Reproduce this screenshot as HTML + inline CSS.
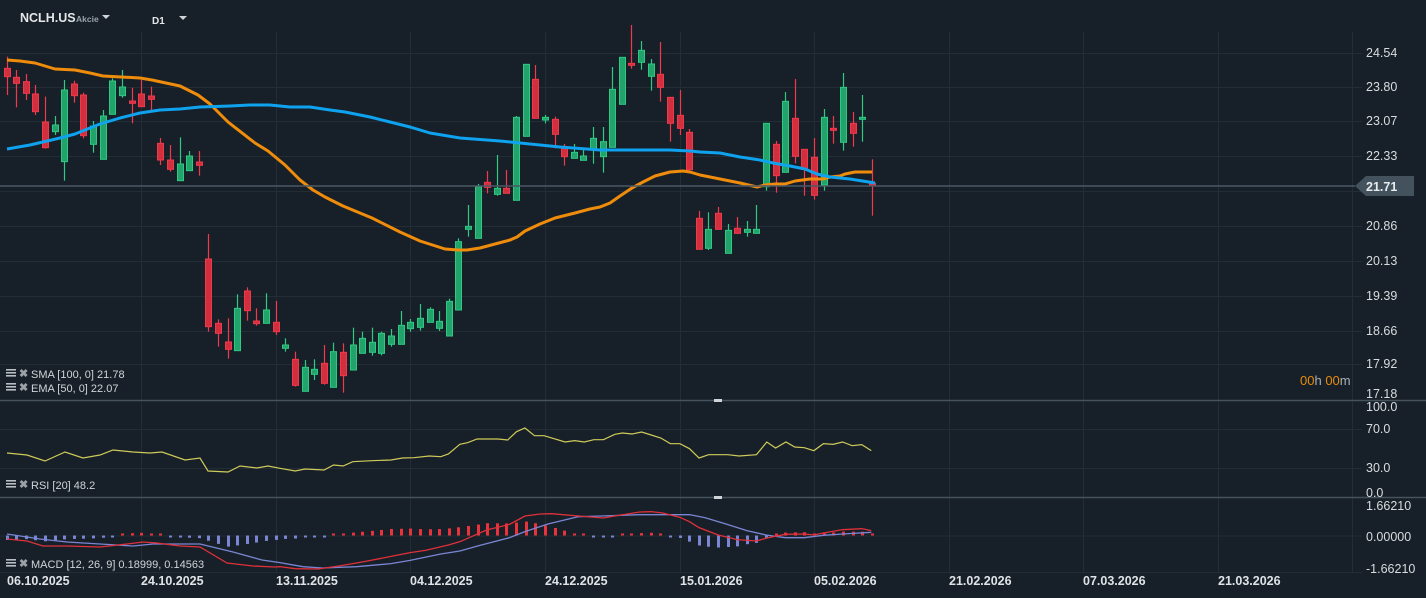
<!DOCTYPE html>
<html><head><meta charset="utf-8"><style>
html,body{margin:0;padding:0;background:#172028;width:1426px;height:598px;overflow:hidden}
svg{display:block}
text{font-family:"Liberation Sans",sans-serif}
</style></head><body>
<svg id="s" width="1426" height="598" xmlns="http://www.w3.org/2000/svg">
<rect width="1426" height="598" fill="#172028"/>
<g id="grid" stroke="#222d36" stroke-width="1"></g>
<g id="cd"></g>
<polyline id="ema" fill="none" stroke="#f08c0c" stroke-width="3" stroke-linejoin="round"/>
<polyline id="sma" fill="none" stroke="#0ea2ef" stroke-width="3" stroke-linejoin="round"/>
<line x1="0" y1="186" x2="1355" y2="186" stroke="#4a5866" stroke-width="1.5"/>
<polygon points="1355,186 1366,176 1414,176 1414,196 1366,196" fill="#44525e"/>
<text x="1366" y="191" fill="#e8ecef" font-size="12.5" font-weight="bold">21.71</text>
<line x1="0" y1="400.5" x2="1426" y2="400.5" stroke="#46525c" stroke-width="1.5"/>
<line x1="0" y1="497.5" x2="1426" y2="497.5" stroke="#46525c" stroke-width="1.5"/>
<rect x="714" y="399" width="8" height="3" fill="#d0d4d8"/>
<rect x="714" y="496" width="8" height="3" fill="#d0d4d8"/>
<polyline id="rsi" fill="none" stroke="#cfca5a" stroke-width="1.2"/>
<g id="hist"></g>
<polyline id="mb" fill="none" stroke="#7a86d4" stroke-width="1.3"/>
<polyline id="mr" fill="none" stroke="#e0303a" stroke-width="1.3"/>
<g id="axis" fill="#d8dcdf" font-size="12.5"></g>
<g id="dates" fill="#e0e3e6" font-size="12.5" font-weight="bold"></g>
<text x="20" y="22" fill="#e4e7ea" font-size="12.5" font-weight="bold">NCLH.US</text>
<text x="76" y="22" fill="#9aa3aa" font-size="8.5" font-weight="bold">Akcie</text>
<polygon points="102,15 110,15 106,19" fill="#d0d4d8"/>
<text x="152" y="24" fill="#e4e7ea" font-size="10" font-weight="bold">D1</text>
<polygon points="179,16 187,16 183,20" fill="#d0d4d8"/>
<text x="1300" y="385" font-size="13"><tspan fill="#e88a0a">00</tspan><tspan fill="#a8b0b6">h </tspan><tspan fill="#e88a0a">00</tspan><tspan fill="#a8b0b6">m</tspan></text>
<g id="leg" fill="#d0d4d8" font-size="11"></g>
</svg>
<script>
var NS="http://www.w3.org/2000/svg";
function el(p,t,a,txt){var e=document.createElementNS(NS,t);for(var k in a)e.setAttribute(k,a[k]);if(txt!==undefined)e.textContent=txt;document.getElementById(p).appendChild(e);return e;}
[53,87,121,156,191,226,261,296,331,364].forEach(function(y){el("grid","line",{x1:0,y1:y+0.5,x2:1362,y2:y+0.5});});
[429,468,535.5,572].forEach(function(y){el("grid","line",{x1:0,y1:y+0.5,x2:1362,y2:y+0.5});});
var gx=[141,276,410,545,680,814,949,1083,1218,1352];
gx.forEach(function(x){el("grid","line",{x1:x+0.5,y1:32,x2:x+0.5,y2:572});});
[["24.54",57],["23.80",91],["23.07",125],["22.33",160],["20.86",230],["20.13",265],["19.39",300],["18.66",335],["17.92",368],["17.18",398],["100.0",411],["70.0",433],["30.0",472],["0.0",497],["1.66210",510],["0.00000",541],["-1.66210",573]].forEach(function(a){el("axis","text",{x:1366,y:a[1]},a[0]);});
var dates=["06.10.2025","24.10.2025","13.11.2025","04.12.2025","24.12.2025","15.01.2026","05.02.2026","21.02.2026","07.03.2026","21.03.2026"];
var dx=[7,141,276,410,545,680,814,949,1083,1218];
dates.forEach(function(d,i){el("dates","text",{x:dx[i],y:585},d);});
var A=[[22,'R',55,80,20,135],[49,'R',82,100,60,172],[79,'R',95,130,72,150],[106,'R',132,185,105,195],[136,'R',216,293,140,296],[166,'G',225,245,198,255],[193,'G',120,335,90,392],[223,'R',102,137,92,158],[250,'R',135,257,128,265],[280,'G',228,283,213,308],[310,'G',198,328,180,328],[337,'G',93,193,85,193],[367,'G',111,137,60,143],[395,'R',153,160,113,220],[424,'R',132,170,90,170],[454,'R',138,148,110,180],[481,'R',280,330,264,345],[511,'R',330,358,285,365],[541,'G',342,392,262,392],[568,'G',318,362,303,362],[598,'R',336,346,303,377],[625,'R',627,830,552,845],[655,'R',820,850,808,890],[685,'R',876,898,805,926],[712,'G',775,902,733,902],[742,'R',723,782,712,812],[769,'R',813,821,775,827],[799,'G',780,820,730,820],[829,'R',817,845,753,855],[856,'G',885,895,865,905],[886,'R',928,1006,905,1010],[916,'G',952,1024,930,1024],[943,'G',958,973,928,990],[973,'R',940,1000,885,1004],[1000,'G',905,1012,878,1012],[1030,'R',907,977,880,1028],[1060,'G',885,960,833,960],[1087,'G',865,910,845,910],[1117,'G',877,907,833,917],[1144,'G',850,910,845,916],[1174,'G',858,883,837,890],[1204,'G',826,883,783,883],[1231,'G',817,836,807,845],[1261,'G',805,832,762,842],[1291,'G',778,817,772,817],[1318,'G',814,835,783,843],[1348,'G',754,858,746,858],[1375,'G',575,780,565,780]];
var B=[[85,'G',619,628,555,650],[115,'G',500,655,492,655],[142,'R',487,502,453,520],[172,'G',505,523,405,527],[199,'R',505,520,450,520],[229,'G',292,541,288,541],[259,'G',133,349,133,349],[286,'R',178,295,135,295],[316,'G',292,300,285,310],[346,'R',298,343,290,385],[373,'R',385,410,372,437],[403,'G',397,415,372,415],[430,'G',408,421,390,421],[460,'G',355,390,321,431],[490,'G',365,410,321,458],[517,'G',208,382,141,382],[547,'G',112,253,112,253],[574,'R',130,136,15,146],[604,'G',91,127,63,149],[634,'G',132,169,117,212],[661,'R',163,202,66,245],[691,'R',232,310,232,365],[721,'R',286,325,210,345],[748,'R',337,449,327,449],[778,'R',595,688,573,688],[805,'G',628,685,577,690],[835,'R',580,628,561,628],[865,'G',631,700,612,700],[892,'R',625,640,591,640],[922,'G',628,637,603,650],[949,'G',628,640,555,640],[979,'G',310,500,310,512],[1009,'R',373,467,363,518],[1036,'G',244,457,216,457],[1066,'R',295,409,177,430],[1093,'R',388,448,388,527],[1123,'R',412,526,354,539],[1153,'G',292,495,267,512],[1180,'R',325,331,288,371],[1210,'G',202,367,159,392],[1240,'R',310,340,276,380],[1267,'G',292,298,225,365],[1297,'R',490,495,418,587]];
var C=[];
A.forEach(function(c){C.push([c[0]/3,c[1],50+c[2]/3,50+c[3]/3,50+c[4]/3,50+c[5]/3]);});
B.forEach(function(c){C.push([440+c[0]/3,c[1],20+c[2]/3,20+c[3]/3,20+c[4]/3,20+c[5]/3]);});
C.forEach(function(c){
 var x=Math.round(c[0]), r=c[1]=='R', f=r?'#d22f3e':'#22a36b', s=r?'#f2384b':'#2fca82';
 el("cd","line",{x1:x+0.5,y1:c[4],x2:x+0.5,y2:c[5],stroke:s,'stroke-width':1.2});
 var h=Math.max(c[3]-c[2],2);
 el("cd","rect",{x:x-2.5,y:c[2],width:6,height:h,fill:f,stroke:s,'stroke-width':1});
});
function pl(id,pts){document.getElementById(id).setAttribute("points",pts.map(function(p){return p[0]+","+p[1];}).join(" "));}
pl("ema",[[7,60],[20,61],[35,63],[55,69],[75,70],[90,73],[103,76],[140,78],[152,80],[180,86],[198,95],[210,104],[228,122],[255,143],[268,151],[285,165],[300,180],[313,190],[325,197],[343,206],[372,218],[400,232],[420,241],[445,249],[458,250],[467,250],[480,248],[495,244],[510,240],[517,237],[525,231],[540,224],[555,218],[575,213],[590,209],[600,207],[610,203],[620,196],[632,188],[643,182],[655,176],[670,172],[683,171],[690,172],[700,175],[720,179],[740,183],[757,187],[765,185],[775,184],[785,184],[795,181],[810,179],[823,179],[830,177],[840,176],[845,174],[855,172],[872,172]]);
pl("sma",[[7,149],[30,145],[60,138],[75,134],[100,124],[120,118],[140,113],[160,110],[180,109],[200,107],[230,106],[250,105],[270,105],[290,107],[310,107],[330,110],[345,112],[370,117],[390,122],[410,127],[430,133],[460,138],[500,141],[520,143],[540,145],[560,147],[600,150],[640,150],[670,150],[690,151],[700,152],[720,153],[740,157],[760,160],[773,163],[790,166],[805,169],[817,174],[830,177],[850,179],[875,183]]);
var R=[[7,453],[27,455],[45,461],[65,452],[83,458],[100,455],[113,450],[133,452],[150,453],[162,452],[185,460],[200,458],[208,471],[228,472],[240,466],[257,468],[268,466]];
[[0,205],[40,213],[65,207],[115,210],[140,195],[165,198],[190,185],[240,182],[290,180],[320,174],[350,173],[390,168],[420,170],[440,162],[470,133],[490,128],[515,117],[570,117],[595,120],[618,95],[640,84],[665,107],[690,107],[745,126],[770,122],[795,126],[820,119],[845,119],[875,103],[895,99],[920,102],[945,96],[970,105],[995,114],[1020,131],[1045,131],[1070,146],[1095,174],[1120,164],[1170,164],[1200,168],[1245,164],[1272,126],[1295,144],[1322,126],[1345,141],[1370,143],[1395,152],[1420,131],[1445,133],[1470,126],[1495,137],[1520,134],[1545,152]].forEach(function(p){R.push([280+p[0]/2.613,400+p[1]/3]);});
pl("rsi",R);
var s=2.613;
function cv(a){return a.map(function(p){return [280+p[0]/s,400+p[1]/3];});}
var MR=[[7,539],[27,541],[43,546],[67,546],[100,547],[127,544],[143,542],[157,543],[180,546],[200,547],[227,563],[253,566],[275,567]].concat(cv([[0,500],[40,506],[100,507],[160,497],[220,485],[300,467],[340,458],[380,451],[440,435],[470,425],[500,410],[540,390],[600,373],[640,348],[680,342],[710,341],[780,348],[845,354],[880,347],[940,336],[970,335],[1000,339],[1045,352],[1070,365],[1095,383],[1145,405],[1195,419],[1245,423],[1272,414],[1320,403],[1370,402],[1395,405],[1420,399],[1470,389],[1520,386],[1545,392]]));
var MB=[[7,534],[40,539],[67,542],[100,544],[133,546],[153,544],[200,544],[233,552],[262,560]].concat(cv([[0,488],[60,500],[110,504],[200,500],[290,491],[340,481],[420,462],[470,453],[520,437],[600,413],[640,395],[700,372],[780,350],[840,348],[940,344],[1040,344],[1070,344],[1110,353],[1160,370],[1220,392],[1270,405],[1320,413],[1370,413],[1420,406],[1470,402],[1545,397]]));
pl("mr",MR);pl("mb",MB);
function interp(arr,x){for(var i=0;i<arr.length-1;i++){if(x>=arr[i][0]&&x<=arr[i+1][0]){var t=(x-arr[i][0])/(arr[i+1][0]-arr[i][0]);return arr[i][1]+t*(arr[i+1][1]-arr[i][1]);}}return arr[arr.length-1][1];}
C.forEach(function(c){var x=Math.round(c[0]);var d=interp(MB,x)-interp(MR,x);var h=Math.max(Math.abs(d)*0.9,2);
 if(d>0)el("hist","rect",{x:x-1,y:535.5-h,width:3,height:h,fill:'#e8323c'});else el("hist","rect",{x:x-1,y:535.5,width:3,height:h,fill:'#7a86d4'});});
function leg(y,t){
 el("leg","rect",{x:6,y:y-8,width:10,height:1.6,fill:'#b8bec3'});el("leg","rect",{x:6,y:y-5,width:10,height:1.6,fill:'#b8bec3'});el("leg","rect",{x:6,y:y-2,width:10,height:1.6,fill:'#b8bec3'});
 el("leg","text",{x:19,y:y,fill:'#9aa2a8','font-size':11,'font-weight':'bold'},"\u2716");
 el("leg","text",{x:31,y:y+1},t);}
leg(377,"SMA [100,  0] 21.78");leg(391,"EMA [50,  0] 22.07");leg(488,"RSI [20]  48.2");leg(567,"MACD [12, 26, 9] 0.18999,  0.14563");
</script>
</body></html>
